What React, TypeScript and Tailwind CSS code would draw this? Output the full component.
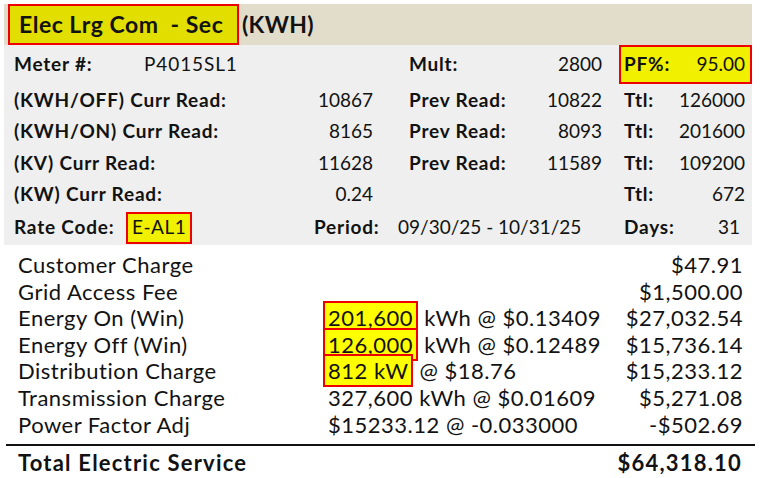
import React from 'react';

const READS = [
    { label: '(KWH/OFF) Curr Read:', curr: '10867', prev: '10822', ttl: '126000' },
    { label: '(KWH/ON) Curr Read:', curr: '8165', prev: '8093', ttl: '201600' },
    { label: '(KV) Curr Read:', curr: '11628', prev: '11589', ttl: '109200' },
    { label: '(KW) Curr Read:', curr: '0.24', prev: '', ttl: '672' },
];

const CHARGES = [
    { name: 'Customer Charge', qty: '', detail: '', amount: '$47.91' },
    { name: 'Grid Access Fee', qty: '', detail: '', amount: '$1,500.00' },
    { name: 'Energy On (Win)', qty: '201,600', detail: ' kWh @ $0.13409', amount: '$27,032.54' },
    { name: 'Energy Off (Win)', qty: '126,000', detail: ' kWh @ $0.12489', amount: '$15,736.14' },
    { name: 'Distribution Charge', qty: '812 kW', detail: ' @ $18.76', amount: '$15,233.12' },
    { name: 'Transmission Charge', qty: '', detail: '327,600 kWh @ $0.01609', amount: '$5,271.08' },
    { name: 'Power Factor Adj', qty: '', detail: '$15233.12 @ -0.033000', amount: '-$502.69' },
];

export default function App() {
    return (
        <div className="w-[761px] h-[478px] bg-white text-[#121212] overflow-hidden" style={{ fontFamily: 'Lato, "Liberation Sans", sans-serif' }}>
            {/* Title band */}
            <div className="mt-[4px] mx-[4px] w-[748px] h-[41px] bg-[#e2dccb] flex items-stretch">
                <div className="ml-[4px] w-[231px] shrink-0 border-2 border-[#ee0000] bg-[#e1de00] flex items-center pl-[9px] text-[23px] font-bold tracking-[0.5px] whitespace-pre">
                    Elec Lrg Com  - Sec
                </div>
                <div className="flex items-center pl-[3px] text-[23px] font-bold tracking-[0.3px]">(KWH)</div>
            </div>

            {/* Meter readings */}
            <div className="mx-[4px] w-[748px] h-[200px] bg-[#eeefee] text-[19px]">
                <div className="h-[39px] flex items-center">
                    <div className="ml-[10px] w-[359px] flex">
                        <span className="font-bold tracking-[0.8px] w-[130px]">Meter #:</span>
                        <span className="tracking-[0.9px]">P4015SL1</span>
                    </div>
                    <div className="ml-[36px] w-[193px] flex justify-between">
                        <span className="font-bold tracking-[0.8px]">Mult:</span>
                        <span>2800</span>
                    </div>
                    <div className="ml-[17px] w-[133px] h-full border-2 border-[#ee0000] bg-[#f0f000] flex items-center justify-between pl-[3px] pr-[5px]">
                        <span className="font-bold tracking-[0.8px]">PF%:</span>
                        <span>95.00</span>
                    </div>
                </div>
                {READS.map((r) => (
                    <div key={r.label} className="h-[31.5px] flex items-center">
                        <div className="ml-[10px] w-[359px] flex justify-between">
                            <span className="font-bold tracking-[0.8px]">{r.label}</span>
                            <span>{r.curr}</span>
                        </div>
                        <div className="ml-[36px] w-[193px] flex justify-between">
                            {r.prev && <span className="font-bold tracking-[0.8px]">Prev Read:</span>}
                            <span>{r.prev}</span>
                        </div>
                        <div className="ml-[17px] w-[133px] flex justify-between pl-[5px] pr-[7px]">
                            <span className="font-bold tracking-[0.8px]">Ttl:</span>
                            <span>{r.ttl}</span>
                        </div>
                    </div>
                ))}
                <div className="h-[35px] flex items-center">
                    <div className="ml-[10px] w-[300px] flex items-center">
                        <span className="font-bold tracking-[0.8px] w-[112px]">Rate Code:</span>
                        <span className="h-[32px] border-2 border-[#ee0000] bg-[#f0f000] flex items-center px-[4px] tracking-[0.5px]">E-AL1</span>
                    </div>
                    <span className="font-bold tracking-[0.8px] w-[84px]">Period:</span>
                    <span className="w-[226px]">09/30/25 - 10/31/25</span>
                    <div className="w-[121px] flex justify-between pr-[5px]">
                        <span className="font-bold tracking-[0.8px]">Days:</span>
                        <span>31</span>
                    </div>
                </div>
            </div>

            {/* Charges */}
            <div className="mt-[7px] px-[18px] text-[22px] tracking-[0.5px] leading-[26.6px]">
                {CHARGES.map((c) => (
                    <div key={c.name} className="flex">
                        <span className="w-[310px]">{c.name}</span>
                        <span className="flex-1 whitespace-pre">
                            {c.qty && (
                                <span className="-ml-[5px] px-[3px] py-[1px] border-2 border-[#ee0000] bg-[#ffff00]">{c.qty}</span>
                            )}
                            {c.detail}
                        </span>
                        <span className="text-right">{c.amount}</span>
                    </div>
                ))}
            </div>
            <div className="mt-[6px] mx-[6px] h-[2px] bg-[#111]" />
            <div className="mt-[3px] pl-[18px] pr-[19px] flex justify-between text-[22px] font-bold tracking-[1.2px] leading-[28px]">
                <span>Total Electric Service</span>
                <span>$64,318.10</span>
            </div>
        </div>
    );
}
